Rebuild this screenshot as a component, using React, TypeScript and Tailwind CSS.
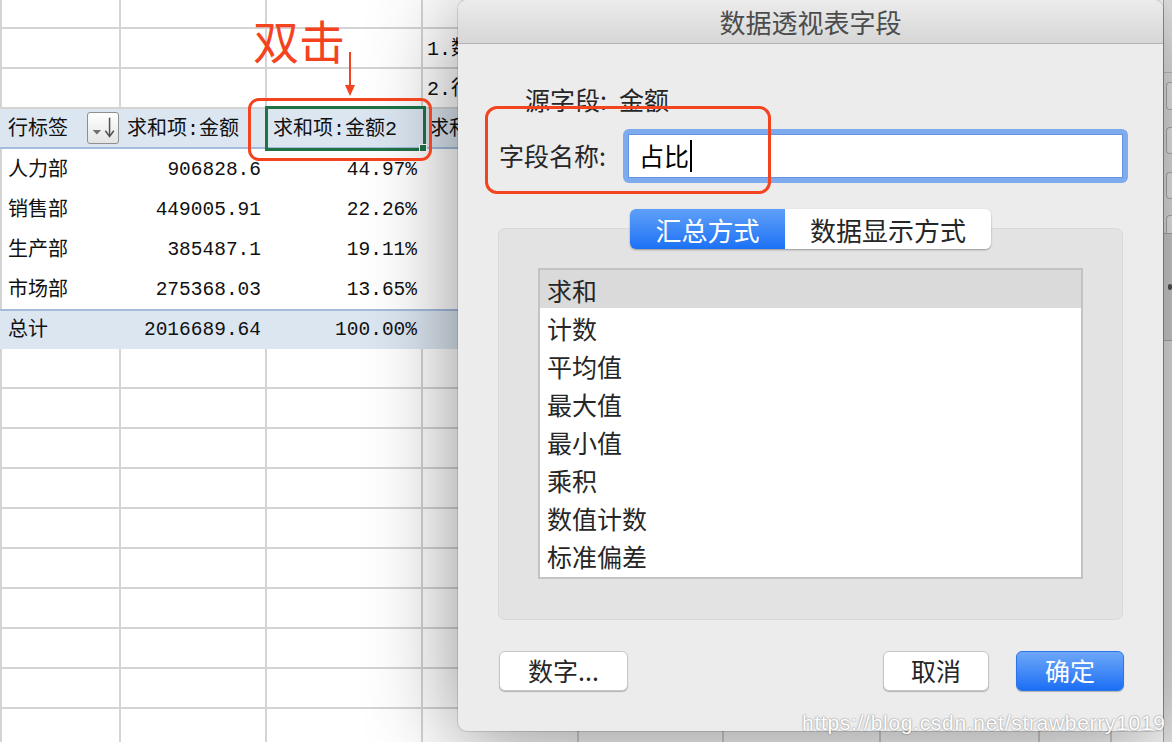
const COLS = [
  "w-[119px]",
  "w-[146px]",
  "w-[156px]",
  "w-[156px]",
  "w-[145px]",
  "w-[157px]",
  "w-[159px]",
  "w-[72px]",
  "w-[200px]",
];

const pivotRows = [
  { name: "人力部", amount: "906828.6", pct: "44.97%" },
  { name: "销售部", amount: "449005.91", pct: "22.26%" },
  { name: "生产部", amount: "385487.1", pct: "19.11%" },
  { name: "市场部", amount: "275368.03", pct: "13.65%" },
];

const methods = ["求和", "计数", "平均值", "最大值", "最小值", "乘积", "数值计数", "标准偏差"];

function GridRow({ first, note }: { first?: boolean; note?: string }) {
  return (
    <div
      className={`flex shrink-0 ${first ? "h-[29px]" : "h-[40px]"} border-b-2 border-l-2 border-[#d4d4d4]`}
    >
      {COLS.map((w, i) => (
        <div
          key={i}
          className={`${w} shrink-0 h-full border-r-2 border-[#d4d4d4] flex items-end pb-[2px] pl-[4px] whitespace-nowrap overflow-hidden`}
        >
          {i === 3 && note}
        </div>
      ))}
    </div>
  );
}

function SortButton() {
  return (
    <div className="w-[32px] h-[32px] shrink-0 rounded-[3px] border border-[#8f8f8f] bg-gradient-to-b from-white to-[#e4e4e4]">
      <svg viewBox="0 0 32 32" className="w-full h-full" aria-hidden="true">
        <polygon points="5,18 14,18 9.5,23" fill="#707070" />
        <line x1="23" y1="5" x2="23" y2="24" stroke="#505050" strokeWidth="1.6" />
        <polyline points="18.5,19 23,25 27.5,19" fill="none" stroke="#505050" strokeWidth="1.6" />
      </svg>
    </div>
  );
}

function Sheet() {
  return (
    <div className="flex-1 min-w-0 flex flex-col overflow-hidden bg-white text-[20px] text-[#111] font-['Liberation_Mono','Noto_Sans_CJK_SC',monospace]">
      <GridRow first />
      <GridRow note="1.数据透视表" />
      <GridRow note="2.行标签" />

      {/* pivot header */}
      <div className="flex shrink-0 h-[40px] bg-[#dce6f1] border-b-2 border-[#a3bcdc]">
        <div className={`${COLS[0]} ml-[2px] shrink-0 flex items-center pl-[6px] pr-[2px]`}>
          <span className="pt-[4px]">行标签</span>
          <span className="ml-auto">
            <SortButton />
          </span>
        </div>
        <div className={`${COLS[1]} shrink-0 flex items-center pl-[6px] pt-[4px] whitespace-nowrap`}>求和项:金额</div>
        <div className={`${COLS[2]} shrink-0 relative flex items-center pl-[6px] pt-[4px] whitespace-nowrap`}>
          求和项:金额2
          <div className="absolute -left-[2px] -right-[3px] -top-[3px] -bottom-[4px] border-[3px] border-[#217346]" />
          <div className="absolute -right-[4px] -bottom-[5px] w-[8px] h-[8px] bg-[#217346] border border-white" />
        </div>
        <div className={`${COLS[3]} shrink-0 flex items-center pl-[6px] pt-[4px] whitespace-nowrap`}>求和项:计数</div>
      </div>

      {pivotRows.map((r) => (
        <div key={r.name} className="flex shrink-0 h-[40px] border-l-2 border-[#d4d4d4]">
          <div className={`${COLS[0]} shrink-0 flex items-center pl-[6px] pt-[3px]`}>{r.name}</div>
          <div className={`${COLS[1]} shrink-0 flex items-center justify-end pr-[6px] pt-[3px] text-[19.5px]`}>
            {r.amount}
          </div>
          <div className={`${COLS[2]} shrink-0 flex items-center justify-end pr-[6px] pt-[3px] text-[19.5px]`}>
            {r.pct}
          </div>
        </div>
      ))}

      <div className="flex shrink-0 h-[40px] bg-[#dce6f1] border-t-2 border-[#a3bcdc]">
        <div className={`${COLS[0]} ml-[2px] shrink-0 flex items-center pl-[6px] pt-[2px]`}>总计</div>
        <div className={`${COLS[1]} shrink-0 flex items-center justify-end pr-[6px] pt-[2px] text-[19.5px]`}>2016689.64</div>
        <div className={`${COLS[2]} shrink-0 flex items-center justify-end pr-[6px] pt-[2px] text-[19.5px]`}>100.00%</div>
      </div>

      {Array.from({ length: 10 }).map((_, i) => (
        <GridRow key={i} />
      ))}
    </div>
  );
}

function SideStrip() {
  return (
    <div className="w-[9px] shrink-0 bg-[#e9e9e9] border-l border-[#a9a9a9] flex flex-col">
      <div className="h-[73px] shrink-0 border-b border-[#c6c6c6]" />
      <div className="mt-[9px] ml-[2px] h-[28px] shrink-0 rounded-l-[4px] border border-r-0 border-[#b5b5b5] bg-[#f3f3f3]" />
      <div className="mt-[17px] ml-[2px] h-[27px] shrink-0 rounded-l-[4px] border border-r-0 border-[#b5b5b5] bg-[#f3f3f3]" />
      <div className="mt-[18px] ml-[2px] h-[27px] shrink-0 rounded-l-[4px] border border-r-0 border-[#b5b5b5] bg-[#f3f3f3]" />
      <div className="mt-[16px] ml-[2px] h-[18px] shrink-0 rounded-tl-[4px] border border-r-0 border-b-0 border-[#b5b5b5] bg-[#f3f3f3]" />
      <div className="h-[108px] shrink-0 bg-[#d6d6d6] border-y border-[#b0b0b0] flex items-center pl-[4px]">
        <div className="w-[6px] h-[6px] rounded-full bg-[#555]" />
      </div>
    </div>
  );
}

function Dialog() {
  return (
    <div className="absolute left-[458px] top-0 w-[705px] h-[731px] rounded-[9px] bg-[#ececec] shadow-[0_10px_90px_rgba(0,0,0,0.45),0_0_0_1px_rgba(0,0,0,0.12)] flex flex-col font-['Noto_Sans_CJK_SC',sans-serif] text-[#262626]">
      <div className="h-[44px] shrink-0 rounded-t-[9px] bg-gradient-to-b from-[#ececec] to-[#d6d6d6] border-b border-[#b4b4b4] flex items-center justify-center text-[26px] text-[#4c4c4c]">
        数据透视表字段
      </div>

      <div className="mt-[41px] pl-[67px] h-[30px] flex items-center text-[25px]">
        <span>源字段:</span>
        <span className="ml-[12px]">金额</span>
      </div>

      <div className="mt-[14px] pl-[41px] flex items-center">
        <span className="w-[124px] shrink-0 text-[25px]">字段名称:</span>
        <div className="w-[505px] h-[54px] rounded-[6px] bg-[#7eabee] p-[5px]">
          <div className="h-full bg-white border border-[#6593df] flex items-center pl-[10px] text-[25px] text-black">
            占比
            <span className="ml-[1px] w-[2px] h-[32px] bg-black" />
          </div>
        </div>
      </div>

      {/* tabs sit over the top edge of the group box */}
      <div className="mt-[26px] self-center relative z-10 flex h-[40px] rounded-[6px] shadow-[0_1px_2px_rgba(0,0,0,0.35)] text-[26px]">
        <div className="w-[155px] rounded-l-[6px] bg-gradient-to-b from-[#5e9ff8] to-[#1a71f5] text-white flex items-center justify-center">
          汇总方式
        </div>
        <div className="w-[206px] rounded-r-[6px] bg-white flex items-center justify-center">数据显示方式</div>
      </div>

      <div className="mt-[-21px] mx-[40px] h-[392px] shrink-0 rounded-[7px] bg-[#e3e3e3] border border-[#d9d9d9] pt-[39px] px-[39px]">
        <div className="h-[311px] bg-white border-2 border-[#c3c3c3] flex flex-col text-[25px]">
          {methods.map((m, i) => (
            <div
              key={m}
              className={`h-[38px] shrink-0 pl-[7px] pt-[3px] flex items-center ${i === 0 ? "bg-[#dadada]" : ""}`}
            >
              {m}
            </div>
          ))}
        </div>
      </div>

      <div className="mt-[31px] pl-[41px] pr-[39px] flex items-center text-[25px]">
        <button className="w-[129px] h-[40px] rounded-[6px] bg-white border border-[#c6c6c6] shadow-[0_1px_1px_rgba(0,0,0,0.25)]">
          数字...
        </button>
        <button className="ml-auto w-[106px] h-[40px] rounded-[6px] bg-white border border-[#c6c6c6] shadow-[0_1px_1px_rgba(0,0,0,0.25)]">
          取消
        </button>
        <button className="ml-[27px] w-[108px] h-[40px] rounded-[6px] bg-gradient-to-b from-[#6ca7f8] to-[#1a6ef5] border border-[#2d74e6] text-white shadow-[0_1px_1px_rgba(0,0,0,0.25)]">
          确定
        </button>
      </div>
    </div>
  );
}

export default function App() {
  return (
    <div className="relative w-[1172px] h-[742px] overflow-hidden flex bg-white">
      <Sheet />
      <SideStrip />
      <Dialog />

      {/* annotations */}
      <div className="absolute left-[253px] top-[16px] text-[46px] leading-none text-[#f4431f] font-['Noto_Sans_CJK_SC',sans-serif]">
        双击
      </div>
      <svg className="absolute left-[343px] top-[50px] w-[14px] h-[48px]" viewBox="0 0 14 48" aria-hidden="true">
        <line x1="7" y1="2" x2="7" y2="37" stroke="#f4431f" strokeWidth="2" />
        <polygon points="2,35 12,35 7,46" fill="#f4431f" />
      </svg>
      <div className="absolute left-[248px] top-[98px] w-[184px] h-[63px] rounded-[11px] border-[3px] border-[#f4431f]" />
      <div className="absolute left-[485px] top-[106px] w-[286px] h-[88px] rounded-[12px] border-[3px] border-[#f4431f]" />

      <div className="absolute left-[802px] top-[707px] text-[21px] tracking-[0.7px] text-white font-['Liberation_Sans',sans-serif] [text-shadow:0_0_2px_rgba(0,0,0,0.55)]">
        https://blog.csdn.net/strawberry1019
      </div>
    </div>
  );
}
